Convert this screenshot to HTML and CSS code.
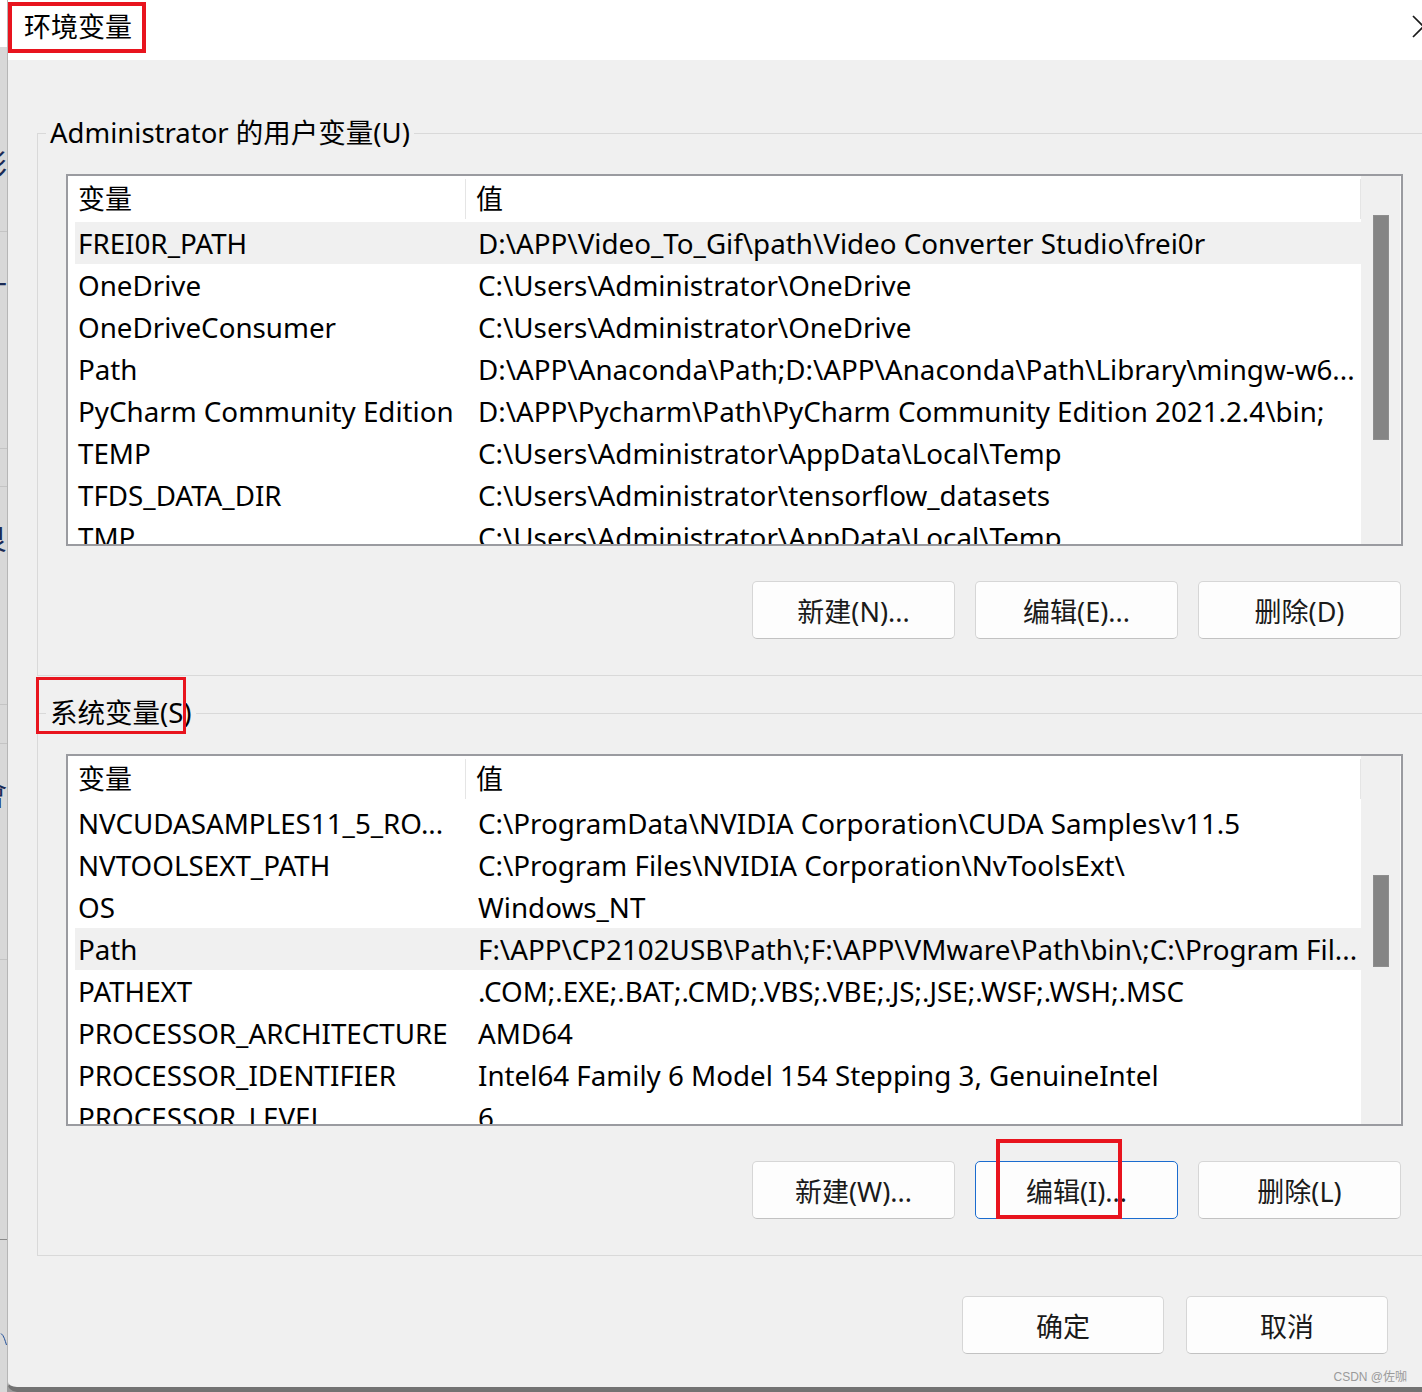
FILE: index.html
```html
<!DOCTYPE html>
<html lang="zh-CN">
<head>
    <meta charset="UTF-8">
    <meta name="viewport" content="width=device-width, initial-scale=1.0">
    <title>环境变量</title>
    <link rel="stylesheet" href="styles.css">
</head>
<body>
    <div class="screen">
        <!-- Ventana del fondo, casi oculta -->
        <div class="backdrop">
            <div class="bd-item bd-top"></div>
            <div class="bd-item bd-a"><span>彩</span></div>
            <div class="bd-item bd-b"><span>计</span></div>
            <div class="bd-item bd-c"></div>
            <div class="bd-item bd-d"><span>良</span></div>
            <div class="bd-item bd-e"></div>
            <div class="bd-item bd-f"><span>會</span></div>
            <div class="bd-item bd-g"></div>
            <div class="bd-item bd-h">
                <svg width="14" height="30" viewBox="0 0 14 30"><path d="M2 4 C 8 8, 10 18, 13 27" stroke="#1f4e9a" stroke-width="2" fill="none"/></svg>
            </div>
        </div>

        <div class="window">
            <div class="titlebar">
                <div class="title">环境变量</div>
                <svg class="close" width="23" height="23" viewBox="0 0 23 23"><path d="M1 1 L22 22 M22 1 L1 22" stroke="#1a1a1a" stroke-width="1.7" fill="none"/></svg>
            </div>

            <div class="content">
                <fieldset class="group group-user">
                    <legend>Administrator 的用户变量(U)</legend>
                    <div class="list">
                        <div class="list-body">
                            <div class="list-head"><span class="name">变量</span><span class="value">值</span></div>
                            <div class="row selected"><span class="name">FREI0R_PATH</span><span class="value">D:\APP\Video_To_Gif\path\Video Converter Studio\frei0r</span></div>
                            <div class="row"><span class="name">OneDrive</span><span class="value">C:\Users\Administrator\OneDrive</span></div>
                            <div class="row"><span class="name">OneDriveConsumer</span><span class="value">C:\Users\Administrator\OneDrive</span></div>
                            <div class="row"><span class="name">Path</span><span class="value">D:\APP\Anaconda\Path;D:\APP\Anaconda\Path\Library\mingw-w6...</span></div>
                            <div class="row"><span class="name">PyCharm Community Edition</span><span class="value">D:\APP\Pycharm\Path\PyCharm Community Edition 2021.2.4\bin;</span></div>
                            <div class="row"><span class="name">TEMP</span><span class="value">C:\Users\Administrator\AppData\Local\Temp</span></div>
                            <div class="row"><span class="name">TFDS_DATA_DIR</span><span class="value">C:\Users\Administrator\tensorflow_datasets</span></div>
                            <div class="row"><span class="name">TMP</span><span class="value">C:\Users\Administrator\AppData\Local\Temp</span></div>
                        </div>
                        <div class="scrollbar"><div class="thumb thumb-user"></div></div>
                    </div>
                    <div class="btn-row">
                        <button class="btn">新建(N)...</button>
                        <button class="btn">编辑(E)...</button>
                        <button class="btn">删除(D)</button>
                    </div>
                </fieldset>

                <fieldset class="group group-system">
                    <legend><span class="mark mark-legend"></span>系统变量(S)</legend>
                    <div class="list">
                        <div class="list-body">
                            <div class="list-head"><span class="name">变量</span><span class="value">值</span></div>
                            <div class="row"><span class="name">NVCUDASAMPLES11_5_RO...</span><span class="value">C:\ProgramData\NVIDIA Corporation\CUDA Samples\v11.5</span></div>
                            <div class="row"><span class="name">NVTOOLSEXT_PATH</span><span class="value">C:\Program Files\NVIDIA Corporation\NvToolsExt\</span></div>
                            <div class="row"><span class="name">OS</span><span class="value">Windows_NT</span></div>
                            <div class="row selected"><span class="name">Path</span><span class="value">F:\APP\CP2102USB\Path\;F:\APP\VMware\Path\bin\;C:\Program Fil...</span></div>
                            <div class="row"><span class="name">PATHEXT</span><span class="value">.COM;.EXE;.BAT;.CMD;.VBS;.VBE;.JS;.JSE;.WSF;.WSH;.MSC</span></div>
                            <div class="row"><span class="name">PROCESSOR_ARCHITECTURE</span><span class="value">AMD64</span></div>
                            <div class="row"><span class="name">PROCESSOR_IDENTIFIER</span><span class="value">Intel64 Family 6 Model 154 Stepping 3, GenuineIntel</span></div>
                            <div class="row"><span class="name">PROCESSOR_LEVEL</span><span class="value">6</span></div>
                        </div>
                        <div class="scrollbar"><div class="thumb thumb-system"></div></div>
                    </div>
                    <div class="btn-row">
                        <button class="btn">新建(W)...</button>
                        <button class="btn btn-focus"><span class="mark mark-button"></span>编辑(I)...</button>
                        <button class="btn">删除(L)</button>
                    </div>
                </fieldset>

                <div class="dialog-buttons">
                    <button class="btn btn-dialog">确定</button>
                    <button class="btn btn-dialog">取消</button>
                </div>
                <div class="watermark">CSDN @佐咖</div>
            </div>
        </div>
    </div>
</body>
</html>
```

FILE: styles.css
```css
/* Diálogo de variables de entorno */
* {
    box-sizing: border-box;
}

body {
    margin: 0;
    overflow: hidden;
    background: #d6d6d6;
    font-family: "Noto Sans", "Noto Sans CJK SC", sans-serif;
    color: #000;
}

.screen {
    display: flex;
    width: 1422px;
    height: 1392px;
    overflow: hidden;
    background: #9c9c9c;
}

/* Franja de la ventana que queda detrás */
.backdrop {
    width: 7px;
    flex-shrink: 0;
    display: flex;
    flex-direction: column;
    background: #d8d8d8;
    overflow: hidden;
}

.bd-item {
    display: flex;
    justify-content: flex-end;
    align-items: flex-start;
    flex-shrink: 0;
    border-bottom: 1px solid #c4c4c4;
    font-size: 30px;
    line-height: 30px;
    color: #1a2a55;
    white-space: nowrap;
}

.bd-top { height: 47px; background: #fff; border-bottom: none; }
.bd-a { height: 185px; padding-top: 103px; }
.bd-b { height: 217px; padding-top: 40px; }
.bd-c { height: 38px; }
.bd-d { height: 218px; padding-top: 36px; }
.bd-e { height: 39px; }
.bd-f { height: 216px; padding-top: 35px; }
.bd-g { height: 280px; border-bottom-color: #8a8a8a; }
.bd-h { height: 200px; border-bottom: none; padding-top: 84px; }

/* Ventana */
.window {
    width: 1460px;
    height: 1392px;
    flex-shrink: 0;
    background: #f0f0f0;
    border-left: 1px solid #b6b6b6;
    border-bottom: 5px solid #727272;
    border-bottom-left-radius: 10px;
}

.titlebar {
    height: 60px;
    background: #fff;
    display: flex;
    align-items: flex-start;
}

.title {
    margin-top: 2px;
    width: 138px;
    height: 51px;
    padding-left: 12px;
    border: 4px solid #e8141e;
    font-size: 27px;
    line-height: 42px;
}

.close {
    margin-left: auto;
    margin-top: 15px;
    margin-right: 32px;
}

.content {
    padding-left: 29px;
}

/* Grupos */
.group {
    width: 1420px;
    min-width: 0;
    margin: 55px 0 0 0;
    padding: 23px 0 36px 8px;
    border: 1px solid #d9d9d9;
}

.group-system {
    margin-top: 19px;
}

.group legend {
    position: relative;
    padding: 0 4px;
    font-size: 27.5px;
    line-height: 36px;
}

/* Lista */
.list {
    display: flex;
    width: 1337px;
    height: 372px;
    margin-left: 20px;
    border: 2px solid #9a9ba0;
    background: #fff;
}

.list-body {
    flex: 1;
    overflow: hidden;
}

.list-head {
    display: flex;
    align-items: center;
    height: 46px;
    font-size: 27px;
}

.list-head .name {
    width: 398px;
    height: 40px;
    line-height: 40px;
    padding-left: 10px;
    border-right: 1px solid #e5e5e5;
}

.list-head .value {
    flex: 1;
    height: 40px;
    line-height: 40px;
    padding-left: 10px;
    border-right: 1px solid #e5e5e5;
}

.row {
    display: flex;
    height: 42px;
    margin-left: 7px;
    font-size: 27.75px;
    line-height: 42px;
    white-space: nowrap;
}

.row.selected {
    background: #f0f0f0;
}

.row .name {
    width: 400px;
    flex-shrink: 0;
    padding-left: 3px;
    overflow: hidden;
}

.row .value {
    flex: 1;
    padding-left: 3px;
    overflow: hidden;
}

.scrollbar {
    width: 40px;
    flex-shrink: 0;
    background: #f0f0f0;
    border-right: 1px solid #fafafa;
}

.thumb {
    width: 16px;
    margin-left: 12px;
    background: #858585;
    border: 1px solid #8e8e8e;
}

.thumb-user {
    margin-top: 39px;
    height: 225px;
}

.thumb-system {
    margin-top: 119px;
    height: 92px;
}

/* Botones */
.btn-row {
    display: flex;
    justify-content: flex-end;
    gap: 20px;
    width: 1335px;
    margin: 35px 0 0 20px;
}

.btn {
    position: relative;
    width: 203px;
    height: 58px;
    padding: 0;
    background: #fdfdfd;
    border: 1px solid #d6d6d6;
    border-bottom-color: #c2c2c2;
    border-radius: 5px;
    font-family: inherit;
    font-size: 27px;
    color: #1a1a1a;
}

.btn-focus {
    border: 1px solid #1b6ccf;
}

.dialog-buttons {
    display: flex;
    justify-content: flex-end;
    gap: 22px;
    width: 1351px;
    margin-top: 40px;
}

.btn-dialog {
    width: 202px;
}

/* Marcas rojas sobre la captura */
.mark {
    position: absolute;
    border: 4px solid #e8141e;
}

.mark-legend {
    left: -10px;
    top: -18px;
    width: 150px;
    height: 57px;
    border-width: 3px;
}

.mark-button {
    left: 20px;
    top: -23px;
    width: 126px;
    height: 80px;
}

.watermark {
    width: 1370px;
    margin-top: 15px;
    text-align: right;
    font-family: "Liberation Sans", "Noto Sans CJK SC", sans-serif;
    font-size: 12px;
    line-height: 16px;
    color: #9a9a9a;
}
```
